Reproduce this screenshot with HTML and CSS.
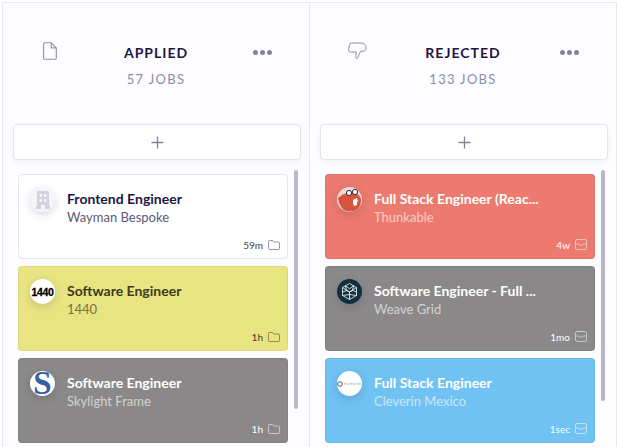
FILE: index.html
```html
<!DOCTYPE html>
<html lang="en">
<head>
    <meta charset="UTF-8">
    <meta name="viewport" content="width=device-width, initial-scale=1.0">
    <title>Job board</title>
    <link rel="stylesheet" href="styles.css">
</head>
<body>

    <svg class="defs" width="0" height="0">
        <symbol id="folder" viewBox="0 0 12 10">
            <path d="M.5 1.5a1 1 0 0 1 1-1h3l1.200 1.500h4.800a1 1 0 0 1 1 1v5.500a1 1 0 0 1-1 1h-9a1 1 0 0 1-1-1z" fill="none" stroke="currentColor" stroke-width=".7"/>
        </symbol>
        <symbol id="inbox" viewBox="0 0 12 11">
            <path d="M2 .5h8A1.500 1.500 0 0 1 11.500 2v7A1.500 1.500 0 0 1 10 10.500H2A1.500 1.500 0 0 1 .5 9V2A1.500 1.500 0 0 1 2 .5zM.5 5h3.500l.8 1.200h2.400L8 5h3.500" fill="none" stroke="currentColor" stroke-width=".7"/>
        </symbol>
    </svg>

    <div class="board">

        <section class="column">
            <header class="column-head">
                <svg class="head-icon" viewBox="0 0 14 18" width="14" height="18">
                    <path d="M1.600.7h6.700l5 5.200v10a1.300 1.300 0 0 1-1.300 1.300H1.600A1.200 1.200 0 0 1 .6 16V2A1.300 1.300 0 0 1 1.600.7zM8.300.7v5.200h5" fill="none" stroke="#928da9" stroke-width="1.100"/>
                </svg>
                <div class="head-text">
                    <h2>APPLIED</h2>
                    <p>57 JOBS</p>
                </div>
                <div class="dots"><i></i><i></i><i></i></div>
            </header>
            <button class="add-btn">
                <svg viewBox="0 0 13 13" width="13" height="13"><path d="M6.500.5v12M.5 6.500h12" stroke="#86829b" stroke-width="1.300"/></svg>
            </button>
            <div class="list-wrap">
                <div class="card-list">
                    <article class="card card-white">
                        <div class="card-top">
                            <div class="logo logo-empty">
                                <svg viewBox="0 0 14 18" width="14" height="18">
                                    <path fill-rule="evenodd" d="M1 1q0-1 1-1h10q1 0 1 1v14h1v3H9v-4H5v4H0v-3h1zM3.500 3v3h2.500V3zM8 3v3h2.500V3zM3.500 8v3h2.500V8zM8 8v3h2.500V8z" fill="#d3d1dd"/>
                                </svg>
                            </div>
                            <div class="card-text">
                                <h3>Frontend Engineer</h3>
                                <p>Wayman Bespoke</p>
                            </div>
                        </div>
                        <div class="card-foot"><span>59m</span><svg width="12" height="10"><use href="#folder"/></svg></div>
                    </article>
                    <article class="card card-yellow">
                        <div class="card-top">
                            <div class="logo"><span class="logo-1440">1440</span></div>
                            <div class="card-text">
                                <h3>Software Engineer</h3>
                                <p>1440</p>
                            </div>
                        </div>
                        <div class="card-foot"><span>1h</span><svg width="12" height="10"><use href="#folder"/></svg></div>
                    </article>
                    <article class="card card-grey">
                        <div class="card-top">
                            <div class="logo"><span class="logo-s">S</span></div>
                            <div class="card-text">
                                <h3>Software Engineer</h3>
                                <p>Skylight Frame</p>
                            </div>
                        </div>
                        <div class="card-foot"><span>1h</span><svg width="12" height="10"><use href="#folder"/></svg></div>
                    </article>
                </div>
                <div class="scrollbar scrollbar-left"></div>
            </div>
        </section>

        <section class="column">
            <header class="column-head">
                <svg class="head-icon head-icon-thumb" viewBox="0 0 19 18" width="19" height="18">
                    <path d="M3.500 1h10.500l3 1.500q1.300 1 1 2.500l-.3 2.500q-.3 1.300-1.700 1.500l-3.500.5-3 6.500q-.6 1-1.500.3-.5-.5-.2-2l.5-4.300H2.500Q.5 10 .6 8L1.300 3.500Q1.700 1.300 3.500 1z" fill="none" stroke="#928da9" stroke-width="1"/>
                </svg>
                <div class="head-text">
                    <h2>REJECTED</h2>
                    <p>133 JOBS</p>
                </div>
                <div class="dots"><i></i><i></i><i></i></div>
            </header>
            <button class="add-btn">
                <svg viewBox="0 0 13 13" width="13" height="13"><path d="M6.500.5v12M.5 6.500h12" stroke="#86829b" stroke-width="1.300"/></svg>
            </button>
            <div class="list-wrap">
                <div class="card-list">
                    <article class="card card-red">
                        <div class="card-top">
                            <div class="logo logo-thunk">
                                <svg viewBox="0 0 25 25" width="25" height="25">
                                    <path d="M1 11q4-4 9-5l8-1q5 3 6 8 0 7-5 10-6 3-12 0Q2 19 1 11z" fill="#d9533f"/>
                                    <path d="M16 13l4-2 1 3-1 1 0 3-3 1-1-3z" fill="#fff"/>
                                    <circle cx="12" cy="6" r="2.600" fill="#fff" stroke="#2b2b3a" stroke-width="1"/>
                                    <circle cx="18" cy="5" r="2.600" fill="#fff" stroke="#2b2b3a" stroke-width="1"/>
                                </svg>
                            </div>
                            <div class="card-text">
                                <h3>Full Stack Engineer (Reac...</h3>
                                <p>Thunkable</p>
                            </div>
                        </div>
                        <div class="card-foot"><span>4w</span><svg width="12" height="11"><use href="#inbox"/></svg></div>
                    </article>
                    <article class="card card-grey">
                        <div class="card-top">
                            <div class="logo logo-weave">
                                <svg viewBox="0 0 25 25" width="25" height="25">
                                    <path d="M12.500 4.500l7 4v8l-7 4-7-4v-8zM5.500 8.500l7 4.500 7-4.500M12.500 13v7.500M8.500 6.800l4 3 4-3M5.500 13l4-1.500-1-4.500M19.500 13l-4-1.500 1-4.500M9.500 11.500l3 1.500 3-1.500M5.500 16.500l7-1 7 1" fill="none" stroke="#fff" stroke-width=".8"/>
                                </svg>
                            </div>
                            <div class="card-text">
                                <h3>Software Engineer - Full ...</h3>
                                <p>Weave Grid</p>
                            </div>
                        </div>
                        <div class="card-foot"><span>1mo</span><svg width="12" height="11"><use href="#inbox"/></svg></div>
                    </article>
                    <article class="card card-blue">
                        <div class="card-top">
                            <div class="logo logo-clever">
                                <svg viewBox="0 0 6 6" width="6" height="6"><circle cx="3" cy="3" r="2.300" fill="none" stroke="#555" stroke-width="1"/></svg>
                                <span>cleverin</span>
                            </div>
                            <div class="card-text">
                                <h3>Full Stack Engineer</h3>
                                <p>Cleverin Mexico</p>
                            </div>
                        </div>
                        <div class="card-foot"><span>1sec</span><svg width="12" height="11"><use href="#inbox"/></svg></div>
                    </article>
                </div>
                <div class="scrollbar scrollbar-right"></div>
            </div>
        </section>

    </div>

</body>
</html>
```

FILE: styles.css
```css
html, body {
    height: 100%;
}

body {
    font-family: "Lato", sans-serif;
    background-color: #ffffff;
    margin: 0;
    padding: 2px 0 0 2px;
    box-sizing: border-box;
    overflow: hidden;
}

.defs {
    position: absolute;
}

.board {
    display: flex;
    height: 445px;
    border-top: 1px solid #e9e8f2;
    overflow: hidden;
}

.column {
    width: 307px;
    flex: none;
    box-sizing: border-box;
    border-left: 1px solid #e9e8f2;
    background: #fdfdff;
    padding: 0 8px 0 10px;
}

.column:last-child {
    width: 308px;
    border-right: 1px solid #e9e8f2;
}

.column-head {
    display: grid;
    grid-template-columns: 60px 1fr 60px;
    height: 121px;
    color: #1d1547;
}

.head-icon {
    margin: 39px 0 0 30px;
}

.head-icon-thumb {
    margin-left: 28px;
}

.head-text {
    text-align: center;
    padding: 40px 2px 0 0;
}

.head-text h2 {
    margin: 0;
    font-size: 14px;
    line-height: 20px;
    font-weight: 700;
    letter-spacing: 1px;
}

.head-text p {
    margin: 7px 0 0;
    font-size: 13px;
    line-height: 18px;
    letter-spacing: 1.3px;
    color: #8f8ba6;
}

.dots {
    display: flex;
    gap: 2px;
    justify-content: center;
    padding: 47px 18px 0 0;
}

.dots i {
    width: 5px;
    height: 5px;
    border-radius: 50%;
    background: #86829b;
}

.add-btn {
    display: flex;
    align-items: center;
    justify-content: center;
    width: 288px;
    height: 36px;
    padding: 1px 0 0;
    background: #ffffff;
    border: 1px solid #e6e5ef;
    border-radius: 4px;
    box-shadow: 0 2px 6px rgba(40, 30, 90, 0.06);
}

.list-wrap {
    display: flex;
    margin-top: 10px;
    height: 280px;
    padding-left: 5px;
}

.card-list {
    width: 270px;
    flex: none;
    padding-top: 4px;
    display: flex;
    flex-direction: column;
    gap: 7px;
}

.card {
    flex: none;
    box-sizing: border-box;
    height: 85px;
    border-radius: 4px;
    border: 1px solid rgba(0, 0, 0, 0.05);
    padding: 12px 7px 0 11px;
    display: flex;
    flex-direction: column;
    justify-content: space-between;
}

.card-white {
    background: #ffffff;
    border-color: #e6e5ef;
    color: #1d1547;
}

.card-white p {
    color: #5c5878;
}

.card-white .card-foot {
    color: #3c3758;
}

.card-yellow {
    background: #e8e482;
    color: #3c3a1d;
}

.card-yellow p {
    color: #75733f;
}

.card-grey {
    background: #8a8888;
    color: #ffffff;
}

.card-red {
    background: #ec7a6f;
    color: #ffffff;
}

.card-blue {
    background: #6fc2f2;
    color: #ffffff;
}

.card-top {
    display: flex;
    gap: 12px;
}

.logo {
    width: 25px;
    height: 25px;
    flex: none;
    border-radius: 50%;
    background: #ffffff;
    box-shadow: 0 3px 8px rgba(40, 30, 90, 0.16);
    display: flex;
    align-items: center;
    justify-content: center;
}

.logo-empty {
    background: #f5f5f9;
}

.logo-1440 {
    font-family: "Liberation Sans", sans-serif;
    font-size: 10.5px;
    font-weight: 700;
    color: #000000;
    letter-spacing: -0.3px;
    -webkit-text-stroke: 0.3px #000;
}

.logo-s {
    font-family: "Liberation Serif", serif;
    font-size: 33px;
    line-height: 25px;
    font-weight: 700;
    color: #34619f;
}

.logo-thunk {
    background: #f1d8d4;
}

.logo-weave {
    background: #12303c;
}

.logo-clever {
    gap: 1px;
    justify-content: flex-start;
}

.logo-clever span {
    font-size: 3px;
    color: #555555;
    letter-spacing: 0.9px;
}

.card-text {
    min-width: 0;
    flex: 1;
    padding: 3px 0 0 0;
}

.card-text h3 {
    margin: 0;
    font-size: 14px;
    line-height: 18px;
    font-weight: 700;
    white-space: nowrap;
}

.card-text p {
    margin: 0;
    font-size: 13px;
    line-height: 18px;
    opacity: 0.62;
}

.card-white .card-text p,
.card-yellow .card-text p {
    opacity: 1;
}

.card-foot {
    display: flex;
    justify-content: flex-end;
    align-items: center;
    gap: 5px;
    height: 11px;
    margin-bottom: 8px;
    font-size: 10px;
}

.card-foot svg {
    flex: none;
    opacity: 0.75;
}

.scrollbar {
    width: 4px;
    flex: none;
    margin-left: 6px;
    border-radius: 2px;
    background: #b8b6c9;
}

.scrollbar-left {
    height: 239px;
}

.scrollbar-right {
    height: 231px;
}
```
